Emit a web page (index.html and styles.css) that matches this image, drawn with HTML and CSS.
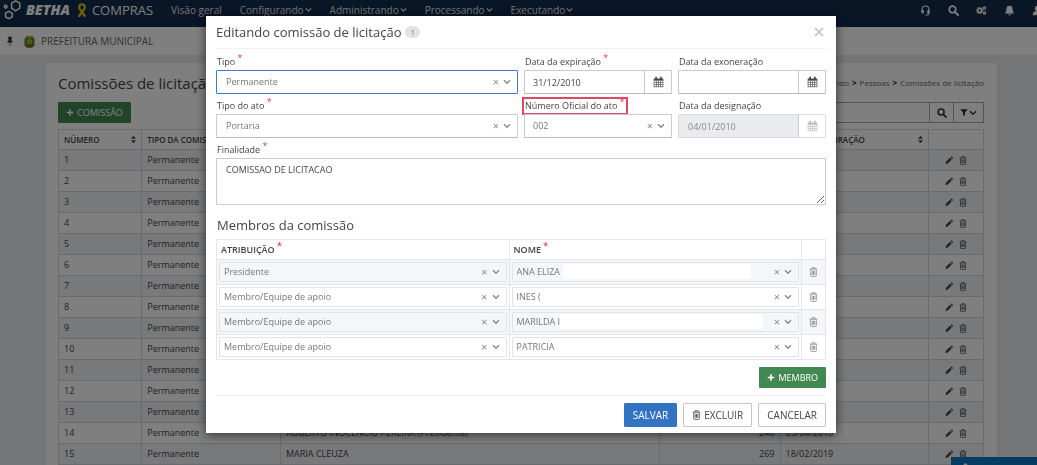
FILE: index.html
```html
<!DOCTYPE html>
<html lang="pt-BR">
<head>
<meta charset="utf-8">
<title>Comissões de licitação</title>
<link rel="stylesheet" href="styles.css">
</head>
<body>
<svg class="sprite" aria-hidden="true">
  <symbol id="chevron" viewBox="0 0 8 6"><path d="M1 1.3 4 4.3 7 1.3" fill="none" stroke="currentColor" stroke-width="1.4"/></symbol>
  <symbol id="trash" viewBox="0 0 14 16"><path d="M1 3.5h12M4.5 3.200V1.200h5v2M2.500 4v9.500q0 1.500 1.300 1.500h6.400q1.300 0 1.300-1.500V4M5 6v6.500M7 6v6.500M9 6v6.500" fill="none" stroke="currentColor" stroke-width="1.300"/></symbol>
  <symbol id="pencil" viewBox="0 0 16 16"><path d="M1 15l1-4.500 8-8 3.500 3.500-8 8zM11 1.500l1-1q1-.700 2 .200l1.300 1.300q.900 1 .2 2l-1 1z" fill="currentColor"/></symbol>
  <symbol id="calendar" viewBox="0 0 16 16"><path d="M1 3h14v12.500H1z" fill="currentColor"/><path d="M2 6h12v8.500H2z" fill="#fff"/><path d="M5 6v9M8 6v9M11 6v9M2 8.700h12M2 11.600h12" stroke="currentColor" stroke-width=".9"/><path d="M4.500 .500v4M11.500 .500v4" stroke="currentColor" stroke-width="2.400"/></symbol>
  <symbol id="search" viewBox="0 0 16 16"><circle cx="6.500" cy="6.500" r="4.800" fill="none" stroke="currentColor" stroke-width="2.400"/><path d="M10 10l4.500 4.500" stroke="currentColor" stroke-width="2.800" stroke-linecap="round"/></symbol>
  <symbol id="sort" viewBox="0 0 6 10"><path d="M0 4l3-3.500L6 4zM0 6l3 3.500L6 6z" fill="currentColor"/></symbol>
  <symbol id="plus" viewBox="0 0 10 10"><path d="M5 1v8M1 5h8" stroke="currentColor" stroke-width="2"/></symbol>
</svg>

<header class="topbar">
  <svg class="brand-mark" viewBox="0 0 20 22" aria-hidden="true"><g fill="none" stroke="currentColor" stroke-width="1.600"><path d="M9 3.500 13.500 1l4.500 2.500v5.500L13.500 12 9 9z"/><path d="M6 12.500l3.700 2v4L6 20.500l-3.700-2v-4z"/><circle cx="2.500" cy="7.300" r="1.500"/></g></svg>
  <strong class="brand">BETHA</strong>
  <svg class="ribbon" viewBox="0 0 10 16" aria-hidden="true"><path d="M1.500 14.500 7.500 6.500q1.500-5-2.500-5t-2.500 5l6 8" fill="none" stroke="#e6c416" stroke-width="2.400"/></svg>
  <span class="product">COMPRAS</span>
  <nav class="menu">
    <a href="#">Visão geral</a>
    <a href="#">Configurando <svg><use href="#chevron"/></svg></a>
    <a href="#">Administrando <svg><use href="#chevron"/></svg></a>
    <a href="#">Processando <svg><use href="#chevron"/></svg></a>
    <a href="#">Executando <svg><use href="#chevron"/></svg></a>
  </nav>
  <div class="tools">
    <button aria-label="Suporte"><svg viewBox="0 0 16 16"><path d="M3 10V7q0-5.500 5-5.500T13 7v5q0 2.500-3 2.500H8" fill="none" stroke="currentColor" stroke-width="1.600"/><path d="M2 7.500h3.500v5H4q-2 0-2-2zM10.500 7.500H14v3q0 2-2 2h-1.500z" fill="currentColor"/></svg></button>
    <button aria-label="Buscar"><svg><use href="#search"/></svg></button>
    <button aria-label="Configurações"><svg viewBox="0 0 18 16"><g fill="none" stroke="currentColor"><circle cx="6" cy="8" r="3.200" stroke-width="2.600"/><circle cx="6" cy="8" r="5" stroke-width="1.800" stroke-dasharray="2 1.920"/><circle cx="14" cy="3.800" r="1.900" stroke-width="2"/><circle cx="14" cy="12.200" r="1.900" stroke-width="2"/></g></svg></button>
    <button aria-label="Notificações"><svg viewBox="0 0 16 16"><path d="M8 1q4.500 0 4.500 5 0 4 2.500 6.500H1Q3.500 10 3.500 6 3.500 1 8 1zM6 13.300h4q-.300 2-2 2t-2-2z" fill="currentColor"/></svg></button>
    <button aria-label="Usuário"><svg viewBox="0 0 16 16"><circle cx="8" cy="5" r="4" fill="currentColor"/><path d="M1 15q0-6 4-6h6q4 0 4 6z" fill="currentColor"/></svg></button>
  </div>
</header>

<div class="entity">
  <svg class="pin" viewBox="0 0 10 14" aria-hidden="true"><path d="M2 1h6v1.500H7.200v4Q9 7.500 9 9H1q0-1.500 1.800-2.500v-4H2zM4.500 9h1v4.500h-1z" fill="currentColor"/></svg>
  <svg class="crest" viewBox="0 0 12 14" aria-hidden="true"><path d="M2 1h8v2l1.500 1v7L9 13.500H3L.5 11V4L2 3z" fill="#4f8f1d"/><path d="M2 1h8v2H2z" fill="#c9a227"/><path d="M.5 11h11L9 13.500H3z" fill="#8a5a1e"/><circle cx="6" cy="7" r="2.500" fill="#f0d52a"/><circle cx="6" cy="7" r="1.200" fill="#1d7a2a"/></svg>
  <span>PREFEITURA MUNICIPAL</span>
</div>

<main class="card">
  <div class="card-head">
    <h1>Comissões de licitação</h1>
    <nav class="crumbs"><a href="#">Configurando</a><b>&gt;</b><a href="#">Pessoas</a><b>&gt;</b><a href="#">Comissões de licitação</a></nav>
  </div>
  <div class="toolbar">
    <button class="btn green"><svg><use href="#plus"/></svg>COMISSÃO</button>
    <div class="search">
      <input type="text" aria-label="Pesquisar">
      <button aria-label="Pesquisar"><svg><use href="#search"/></svg></button>
      <button class="filter" aria-label="Filtrar"><svg viewBox="0 0 12 12"><path d="M.5 1h11L7.500 6v5.500L4.500 9V6z" fill="currentColor"/></svg><svg class="chev"><use href="#chevron"/></svg></button>
    </div>
  </div>
  <table class="list">
    <colgroup><col class="c-num"><col class="c-type"><col class="c-member"><col class="c-act"><col class="c-date"><col class="c-tools"></colgroup>
    <thead><tr><th><span>NÚMERO<svg><use href="#sort"/></svg></span></th><th>TIPO DA COMISSÃO</th><th></th><th></th><th><span>DATA DE EXPIRAÇÃO<svg><use href="#sort"/></svg></span></th><th></th></tr></thead>
    <tbody id="rows"></tbody>
  </table>
</main>
<button class="chat" aria-label="Ajuda"><svg viewBox="0 0 12 12"><path d="M6 1l5 5H1z" fill="#fff"/></svg></button>

<div class="overlay">
  <form class="modal" role="dialog" aria-labelledby="dlg">
    <header class="modal-head">
      <h2 id="dlg">Editando comissão de licitação</h2><span class="badge">1</span>
      <button type="button" class="close" aria-label="Fechar"><svg viewBox="0 0 10 10"><path d="M1 1l8 8M9 1 1 9" stroke="currentColor" stroke-width="1.500"/></svg></button>
    </header>
    <div class="fields">
      <div class="field wide">
        <label for="tipo">Tipo <i>*</i></label>
        <div class="box focus"><select id="tipo"><option>Permanente</option></select><button type="button" class="clear" aria-label="Limpar">×</button><svg class="arrow"><use href="#chevron"/></svg></div>
      </div>
      <div class="field">
        <label for="exp">Data da expiração <i>*</i></label>
        <div class="box"><input id="exp" class="tight" type="text" value="31/12/2010"><button type="button" class="cal" aria-label="Calendário"><svg><use href="#calendar"/></svg></button></div>
      </div>
      <div class="field">
        <label for="exo">Data da exoneração</label>
        <div class="box"><input id="exo" type="text"><button type="button" class="cal" aria-label="Calendário"><svg><use href="#calendar"/></svg></button></div>
      </div>
      <div class="field wide">
        <label for="ato">Tipo do ato <i>*</i></label>
        <div class="box"><select id="ato"><option>Portaria</option></select><button type="button" class="clear" aria-label="Limpar">×</button><svg class="arrow"><use href="#chevron"/></svg></div>
      </div>
      <div class="field marked">
        <label for="num">Número Oficial do ato <i>*</i></label>
        <div class="box"><select id="num" class="tight"><option>002</option></select><button type="button" class="clear" aria-label="Limpar">×</button><svg class="arrow"><use href="#chevron"/></svg></div>
      </div>
      <div class="field">
        <label for="des">Data da designação</label>
        <div class="box off"><input id="des" type="text" value="04/01/2010" disabled><button type="button" class="cal" aria-label="Calendário" disabled><svg><use href="#calendar"/></svg></button></div>
      </div>
      <div class="field full">
        <label for="fin">Finalidade <i>*</i></label>
        <textarea id="fin">COMISSAO DE LICITACAO</textarea>
      </div>
    </div>
    <h3>Membros da comissão</h3>
    <table class="members">
      <colgroup><col><col><col class="m-tools"></colgroup>
      <thead><tr><th>ATRIBUIÇÃO <i>*</i></th><th>NOME <i>*</i></th><th></th></tr></thead>
      <tbody id="members"></tbody>
    </table>
    <div class="add"><button type="button" class="btn green"><svg><use href="#plus"/></svg>MEMBRO</button></div>
    <footer class="modal-foot">
      <button type="button" class="btn blue">SALVAR</button>
      <button type="button" class="btn plain"><svg><use href="#trash"/></svg>EXCLUIR</button>
      <button type="button" class="btn plain">CANCELAR</button>
    </footer>
  </form>
</div>
<script src="app.js"></script>
</body>
</html>
```
FILE: styles.css
```css
* { box-sizing: border-box; }
body { margin: 0; min-height: 100vh; overflow: hidden; background: #e9ebee; color: #444; font: 10px/14px "Open Sans", "Noto Sans", sans-serif; }
button, input, select, textarea { font: inherit; color: inherit; margin: 0; }
button { border: 0; padding: 0; background: none; }
a { color: inherit; text-decoration: none; }
h1, h2, h3 { margin: 0; font-weight: 400; }
svg { display: block; flex: none; }
.sprite { position: absolute; width: 0; height: 0; }

.topbar { display: flex; align-items: center; height: 27px; padding: 0 0 7px 3px; background: #122c4d; color: #fff; }
.brand-mark { width: 19px; height: 20px; }
.brand { margin-left: 4px; font-size: 14px; font-style: italic; font-weight: 800; }
.ribbon { width: 10px; height: 15px; margin: 0 5px 0 7px; }
.product { font-size: 13px; }
.menu { display: flex; gap: 18px; margin-left: 18px; color: #e3e6ea; }
.menu a { display: flex; align-items: center; gap: 1px; }
.menu svg { width: 7px; height: 6px; }
.tools { display: flex; gap: 17px; margin-left: auto; margin-right: -6px; }
.tools svg { width: 11px; height: 11px; }

.entity { display: flex; align-items: center; height: 28px; padding-left: 6px; background: #fff; color: #666; }
.pin { width: 8px; height: 10px; color: #333; }
.crest { width: 11px; height: 13px; margin: 0 6px 0 10px; }

.card { margin: 8px 40px 0 46px; padding: 12px 13px 0 12px; background: #fff; font-size: 9px; }
.card-head { display: flex; align-items: center; justify-content: space-between; height: 16px; }
h1 { font-size: 15px; line-height: 18px; }
.crumbs { display: flex; gap: 3px; font-size: 8px; color: #666; }
.crumbs b { color: #222; }
.toolbar { display: flex; gap: 12px; justify-content: space-between; margin: 11px 0 6px; }
.search { display: flex; flex: 0 1 400px; height: 21px; border: 1px solid #aaa; color: #333; }
.search input { flex: 1; min-width: 0; border: 0; }
.search button { display: flex; align-items: center; justify-content: center; gap: 1px; width: 24px; border-left: 1px solid #aaa; }
.search .filter { width: 30px; }
.search svg { width: 10px; height: 10px; }
.search .filter svg { width: 8px; height: 9px; }
.search .filter .chev { height: 6px; }

table { width: 100%; table-layout: fixed; border-collapse: collapse; }
.list th, .list td { height: 21px; padding: 0 5px; border: 1px solid #d4d7db; text-align: left; white-space: nowrap; overflow: hidden; }
.list th { height: 20px; font-size: 8px; font-weight: 600; }
.list th span { display: flex; align-items: center; justify-content: space-between; }
.list th svg { width: 5px; height: 9px; }
.list tbody tr:nth-child(odd) { background: #f0f2f5; }
.list .num { text-align: right; }
.list .acts { display: flex; justify-content: center; gap: 6px; }
.list .acts svg { width: 8px; height: 9px; }
.c-num { width: 9%; } .c-type { width: 15%; } .c-member { width: 41%; } .c-act { width: 13%; } .c-date { width: 16%; } .c-tools { width: 6%; }
.chat { position: fixed; right: 0; bottom: 0; width: 86px; height: 8px; padding: 5px 10px 0; background: #0a7bc4; overflow: hidden; }
.chat svg { width: 9px; height: 9px; }

.overlay { position: fixed; inset: 0; display: flex; align-items: flex-start; justify-content: center; padding: 16px 0 0 5px; background: rgba(0, 0, 0, .5); }
.modal { width: 90%; max-width: 630px; padding: 0 10px 6px; background: #fff; box-shadow: 0 2px 10px rgba(0, 0, 0, .6); font-size: 9px; }
.modal-head { display: flex; align-items: center; height: 33px; border-bottom: 1px solid #f1f1f1; }
h2, h3 { font-size: 13px; line-height: 18px; }
.badge { margin-left: 4px; padding: 0 5px; border-radius: 6px; background: #e1e3e6; color: #777; font-size: 8px; line-height: 12px; }
.close { margin-left: auto; padding: 2px; color: #bbb; }
.close svg { width: 10px; height: 10px; }

.fields { display: grid; grid-template-columns: repeat(4, minmax(0, 1fr)); column-gap: 6px; padding-top: 6px; }
.field { display: flex; flex-direction: column; align-items: stretch; gap: 1px; padding-bottom: 5px; }
.wide { grid-column: span 2; }
.full { grid-column: 1 / -1; }
label { height: 14px; padding: 0 1px; white-space: nowrap; }
i { color: #e23b3b; font-style: normal; vertical-align: 4px; line-height: 1px; }
.box { display: flex; align-items: center; height: 24px; border: 1px solid #c9cbcd; border-bottom-color: #bbb; border-radius: 1px; background: #fff; }
.focus { border-color: #3c7cc9; }
.box select, .box input { flex: 1; min-width: 0; height: 100%; padding: 0 9px; border: 0; outline: 0; background: none; appearance: none; }
.box select { color: #777; }
.box .tight { padding: 0 8px; }
.clear { width: 10px; color: #888; font-size: 11px; line-height: 12px; }
.arrow { width: 8px; height: 6px; margin: 0 6px 0 2px; color: #888; }
.cal { display: flex; align-items: center; justify-content: center; width: 27px; height: 100%; border-left: 1px solid #c9cbcd; }
.cal svg { width: 11px; height: 12px; }
.off { border-color: #dcdcdc; }
.box.off input { background: #e9ebee; color: #888; }
.off .cal { color: #bbb; }
.marked label { align-self: flex-start; outline: 2px solid #df4765; }
textarea { display: block; width: 100%; height: 47px; padding: 4px 9px; border: 1px solid #c9cbcd; resize: vertical; }

h3 { margin: 6px 0 5px; padding-left: 1px; }
.members th { height: 20px; padding: 0 4px; border: 1px solid #e4e6e9; font-weight: 600; text-align: left; }
.members td { height: 25px; padding: 2px; border: 1px solid #e4e6e9; }
.members tbody tr:nth-child(odd), .members tbody tr:nth-child(odd) .box { background: #f4f6f9; }
.members .box { position: relative; height: 20px; border-color: #e0e3e7; }
.members .box select { padding: 0 4px; }
.m-tools { width: 24px; }
.members td > button { display: block; margin: 0 auto; color: #888; }
.members td > button svg { width: 9px; height: 10px; }
.blank { position: absolute; top: 1px; bottom: 2px; left: 50px; right: 47px; background: #fff; }
.blank.long { left: 47px; right: 35px; }

.btn { display: flex; align-items: center; gap: 3px; height: 21px; padding: 0 8px; border-radius: 1px; white-space: nowrap; }
.btn svg { width: 8px; height: 9px; }
.green { background: #428853; color: #fff; }
.add { display: flex; justify-content: flex-end; padding: 7px 0; border-bottom: 1px solid #f1f1f1; }
.modal-foot { display: flex; justify-content: flex-end; gap: 6px; padding-top: 7px; font-size: 10px; }
.modal-foot .btn { height: 24px; border: 1px solid #c4c6c8; }
.modal-foot .btn svg { width: 9px; height: 10px; }
.modal-foot .blue { background: #3273c4; border-color: #3273c4; color: #fff; }
```
FILE: app.js
```js
const icon = (id) => `<svg><use href="#${id}"/></svg>`;
const details = {
  14: ["ROBERTO INOCENCIO PEREIRA (Presidente)", "246", "03/04/2018"],
  15: ["MARIA CLEUZA", "269", "18/02/2019"]
};
document.getElementById("rows").innerHTML = Array.from({ length: 15 }, (_, i) => {
  const [name, act, date] = details[i + 1] || ["", "", ""];
  return `<tr><td>${i + 1}</td><td>Permanente</td><td>${name}</td><td class="num">${act}</td><td>${date}</td>
    <td><div class="acts"><button aria-label="Editar">${icon("pencil")}</button><button aria-label="Excluir">${icon("trash")}</button></div></td></tr>`;
}).join("");

const select = (label, value, extra = "") =>
  `<div class="box"><select aria-label="${label}"><option>${value}</option></select>${extra}<button type="button" class="clear" aria-label="Limpar">×</button><svg class="arrow"><use href="#chevron"/></svg></div>`;
document.getElementById("members").innerHTML = [
  ["Presidente", "ANA ELIZA", '<span class="blank"></span>'],
  ["Membro/Equipe de apoio", "INES (", ""],
  ["Membro/Equipe de apoio", "MARILDA I", '<span class="blank long"></span>'],
  ["Membro/Equipe de apoio", "PATRICIA", ""]
].map(([role, name, extra]) =>
  `<tr><td>${select("Atribuição", role)}</td><td>${select("Nome", name, extra)}</td><td><button type="button" aria-label="Remover">${icon("trash")}</button></td></tr>`
).join("");
```
